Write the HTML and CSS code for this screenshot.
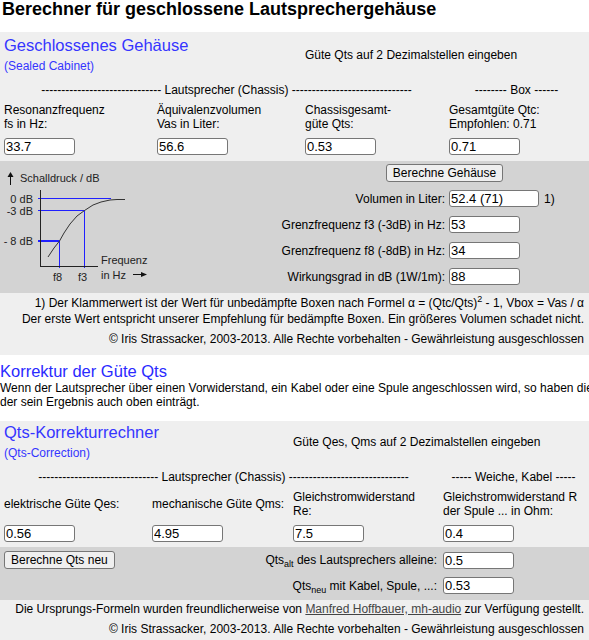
FILE: index.html
```html
<!DOCTYPE html>
<html lang="de">
<head>
<meta charset="utf-8">
<title>Berechner für geschlossene Lautsprechergehäuse</title>
<link rel="stylesheet" href="styles.css">
</head>
<body>
<h1 class="page-title">Berechner für geschlossene Lautsprechergehäuse</h1>

<section class="calc calc-sealed">
  <div class="calc-head">
    <div class="calc-title calc-title-sealed">
      <div class="calc-name">Geschlossenes Gehäuse</div>
      <div class="calc-sub">(Sealed Cabinet)</div>
    </div>
    <div class="calc-hint">Güte Qts auf 2 Dezimalstellen eingeben</div>
  </div>

  <div class="fields fields-sealed">
    <div class="group group-chassis">------------------------------ Lautsprecher (Chassis) ------------------------------</div>
    <div class="group">-------- Box ------</div>
    <div class="label">Resonanzfrequenz<br>fs in Hz:</div>
    <div class="label">Äquivalenzvolumen<br>Vas in Liter:</div>
    <div class="label">Chassisgesamt-<br>güte Qts:</div>
    <div class="label">Gesamtgüte Qtc:<br>Empfohlen: 0.71</div>
    <div><input class="inp" type="text" value="33.7"></div>
    <div><input class="inp" type="text" value="56.6"></div>
    <div><input class="inp" type="text" value="0.53"></div>
    <div><input class="inp" type="text" value="0.71"></div>
  </div>

  <div class="band band-sealed">
    <svg class="graph" width="150" height="126" viewBox="0 0 150 126">
      <g stroke="#2020ff" stroke-width="1" fill="none">
        <line x1="38" y1="34.5" x2="111" y2="34.5"/>
        <line x1="38" y1="46.5" x2="84.5" y2="46.5"/>
        <line x1="84.5" y1="46.5" x2="84.5" y2="104"/>
        <line x1="38" y1="77" x2="59.5" y2="77" stroke-width="2"/>
        <line x1="59.5" y1="77" x2="59.5" y2="104"/>
      </g>
      <g stroke="#222" stroke-width="1" fill="none">
        <line x1="40.5" y1="26" x2="40.5" y2="102.5"/>
        <line x1="40" y1="102.5" x2="98" y2="102.5"/>
        <path d="M48 93 L54 84 L59.5 77 L64 69 L70 60 L77 52 L84.5 46.5 L93 41 L101 38 L110 36 L117 35.5 L125 35.5" stroke="#333"/>
        <line x1="10.5" y1="11" x2="10.5" y2="21" stroke="#111"/>
        <line x1="133" y1="110.5" x2="144" y2="110.5" stroke="#111"/>
      </g>
      <g fill="#111">
        <path d="M7.5 13 L10.5 8 L13.5 13 Z"/>
        <path d="M141 108 L147 110.5 L141 113 Z"/>
      </g>
      <g fill="#222" font-family="Liberation Sans, Arial, sans-serif" font-size="11">
        <text x="20" y="17.5">Schalldruck / dB</text>
        <text x="33" y="38.5" text-anchor="end">0 dB</text>
        <text x="33" y="50.5" text-anchor="end">-3 dB</text>
        <text x="33" y="81" text-anchor="end">- 8 dB</text>
        <text x="57.5" y="117" text-anchor="middle">f8</text>
        <text x="82.5" y="117" text-anchor="middle">f3</text>
        <text x="101" y="99.5">Frequenz</text>
        <text x="101" y="114.5">in Hz</text>
      </g>
    </svg>
    <div class="results">
      <div class="btn-row"><button class="btn" type="button">Berechne Gehäuse</button></div>
      <div class="result-grid">
        <div class="rlabel">Volumen in Liter:</div>
        <div class="rcell"><input class="inp inp-wide" type="text" value="52.4 (71)"><span class="fn">1)</span></div>
        <div class="rlabel">Grenzfrequenz f3 (-3dB) in Hz:</div>
        <div class="rcell"><input class="inp" type="text" value="53"></div>
        <div class="rlabel">Grenzfrequenz f8 (-8dB) in Hz:</div>
        <div class="rcell"><input class="inp" type="text" value="34"></div>
        <div class="rlabel">Wirkungsgrad in dB (1W/1m):</div>
        <div class="rcell"><input class="inp" type="text" value="88"></div>
      </div>
    </div>
  </div>

  <div class="notes notes-sealed">
    <p class="note">1) Der Klammerwert ist der Wert für unbedämpfte Boxen nach Formel α = (Qtc/Qts)<sup>2</sup> - 1, Vbox = Vas / α<br>Der erste Wert entspricht unserer Empfehlung für bedämpfte Boxen. Ein größeres Volumen schadet nicht.</p>
    <p class="copy">© Iris Strassacker, 2003-2013. Alle Rechte vorbehalten - Gewährleistung ausgeschlossen</p>
  </div>
</section>

<h2 class="section-title">Korrektur der Güte Qts</h2>
<p class="intro">Wenn der Lautsprecher über einen Vorwiderstand, ein Kabel oder eine Spule angeschlossen wird, so haben die Chassisdaten andere Werte. Dafür gibt es diesen Rechner,<br>der sein Ergebnis auch oben einträgt.</p>

<section class="calc calc-qts">
  <div class="calc-head">
    <div class="calc-title calc-title-qts">
      <div class="calc-name">Qts-Korrekturrechner</div>
      <div class="calc-sub">(Qts-Correction)</div>
    </div>
    <div class="calc-hint">Güte Qes, Qms auf 2 Dezimalstellen eingeben</div>
  </div>

  <div class="fields fields-qts">
    <div class="group group-chassis">------------------------------ Lautsprecher (Chassis) ------------------------------</div>
    <div class="group">----- Weiche, Kabel -----</div>
    <div class="label label-single">elektrische Güte Qes:</div>
    <div class="label label-single">mechanische Güte Qms:</div>
    <div class="label">Gleichstromwiderstand<br>Re:</div>
    <div class="label">Gleichstromwiderstand R<br>der Spule ... in Ohm:</div>
    <div><input class="inp" type="text" value="0.56"></div>
    <div><input class="inp" type="text" value="4.95"></div>
    <div><input class="inp" type="text" value="7.5"></div>
    <div><input class="inp" type="text" value="0.4"></div>
  </div>

  <div class="band band-qts">
    <div class="btn-cell"><button class="btn" type="button">Berechne Qts neu</button></div>
    <div class="rlabel">Qts<sub>alt</sub> des Lautsprechers alleine:</div>
    <div class="rcell"><input class="inp" type="text" value="0.5"></div>
    <div></div>
    <div class="rlabel">Qts<sub>neu</sub> mit Kabel, Spule, ...:</div>
    <div class="rcell"><input class="inp" type="text" value="0.53"></div>
  </div>

  <div class="notes notes-qts">
    <p class="credit">Die Ursprungs-Formeln wurden freundlicherweise von <a class="credit-link" href="#">Manfred Hoffbauer, mh-audio</a> zur Verfügung gestellt.</p>
    <p class="copy">© Iris Strassacker, 2003-2013. Alle Rechte vorbehalten - Gewährleistung ausgeschlossen</p>
  </div>
</section>
</body>
</html>
```

FILE: styles.css
```css
* { box-sizing: border-box; }

html, body { overflow-x: hidden; }

body {
  margin: 0;
  font-family: "Liberation Sans", Arial, sans-serif;
  font-size: 12px;
  line-height: 14px;
  color: #000;
  background: #fff;
}

p { margin: 0; }

.page-title {
  margin: 0 0 14px;
  padding: 0 2px;
  font-size: 18px;
  line-height: 18px;
  font-weight: bold;
  white-space: nowrap;
}

.calc {
  background: #efefef;
  padding: 3px 0 9px;
}

.calc-qts { padding-top: 1px; }

.calc-head {
  display: flex;
  align-items: center;
  padding-left: 4px;
}

.calc-title-sealed { width: 301px; }
.calc-title-qts { width: 289px; }

.calc-name {
  font-size: 16.5px;
  line-height: 20px;
  color: #3535ff;
}

.calc-sub {
  margin-top: 4px;
  color: #3535ff;
}

.calc-hint { padding-top: 2px; }

.fields {
  display: grid;
  padding-left: 4px;
  padding-right: 5px;
}

.fields-sealed { grid-template-columns: 153px 148px 144px 1fr; }
.fields-qts { grid-template-columns: 148px 141px 150px 1fr; }

.group {
  text-align: center;
  white-space: nowrap;
  margin: 10px 0 6px;
}

.group-chassis { grid-column: span 3; }

.label { align-self: center; }

.inp {
  display: block;
  width: 71px;
  height: 17px;
  margin-top: 7px;
  padding: 0 1px;
  border: 1px solid #767676;
  border-radius: 3px;
  background: #fff;
  color: #000;
  font-family: "Liberation Sans", Arial, sans-serif;
  font-size: 13px;
  line-height: 15px;
}

.inp-wide { width: 90px; }

.band {
  background: #d3d3d3;
}

.band-sealed {
  display: flex;
  margin-top: 6px;
  padding: 3px 0;
}

.graph {
  display: block;
  flex: 0 0 150px;
}

.results { flex: 1; }

.btn-row {
  display: flex;
  justify-content: center;
  padding-left: 150px;
}

.btn {
  height: 18px;
  padding: 1px 6px;
  border: 1px solid #767676;
  border-radius: 3px;
  background: #efefef;
  color: #000;
  font-family: "Liberation Sans", Arial, sans-serif;
  font-size: 12px;
  line-height: 14px;
}

.result-grid {
  display: grid;
  grid-template-columns: 1fr 140px;
  column-gap: 4px;
  row-gap: 9px;
  margin-top: 8px;
}

.rlabel {
  text-align: right;
  align-self: center;
  white-space: nowrap;
}

.rcell {
  display: flex;
  align-items: center;
}

.rcell .inp { margin-top: 0; }

.fn { margin-left: 5px; }

.band-qts {
  display: grid;
  grid-template-columns: auto 1fr 146px;
  column-gap: 6px;
  row-gap: 8px;
  margin-top: 5px;
  padding: 4px 0 6px 4px;
}

.btn-cell { align-self: center; }

sub {
  font-size: 9px;
  line-height: 0;
  vertical-align: -3px;
}

sup {
  font-size: 9px;
  line-height: 0;
  vertical-align: 5px;
}

.notes {
  padding-right: 5px;
  text-align: right;
  white-space: nowrap;
}

.notes-sealed { padding-top: 2px; }
.notes-qts { padding-top: 1px; }

.note { line-height: 16px; }

.credit { line-height: 16px; }

.copy { margin-top: 5px; }

.credit-link {
  color: #444;
  text-decoration: underline;
}

.section-title {
  margin: 7px 0 0;
  font-size: 16.5px;
  line-height: 19px;
  font-weight: normal;
  color: #2a2aff;
}

.intro {
  white-space: nowrap;
  margin-bottom: 12px;
}
```
